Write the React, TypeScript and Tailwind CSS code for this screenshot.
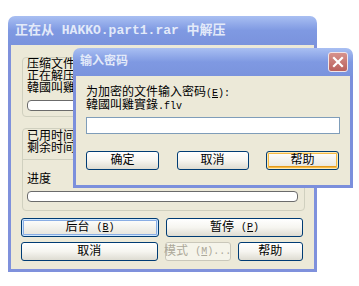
import React from "react";

// XP-style dialogs: extraction progress window with password prompt on top

const CJK = "font-['Liberation_Mono','Noto_Sans_CJK_SC',monospace]";

// half-width latin, about 6px per char like SimSun at 12px
function Lat({ children }: { children: React.ReactNode }) {
  return <span className="text-[10px]">{children}</span>;
}

type BtnKind = "normal" | "focus" | "hot" | "disabled";

function XpButton({
  children,
  kind = "normal",
  className = "",
}: {
  children: React.ReactNode;
  kind?: BtnKind;
  className?: string;
}) {
  const look =
    kind === "disabled"
      ? "border-[#c9c7ba] bg-[#f5f4ea] text-[#aca899]"
      : kind === "hot"
      ? "border-[#003c74] bg-gradient-to-b from-white to-[#e6e4da] text-black shadow-[inset_0_0_0_1px_#fce9b4,inset_0_0_0_2px_#f5b944,inset_0_-1px_0_2px_#e59b1c]"
      : kind === "focus"
      ? "border-[#003c74] bg-gradient-to-b from-white to-[#e6e4da] text-black shadow-[inset_0_0_0_1px_#cee7ff,inset_0_0_0_2px_#89ade4]"
      : "border-[#003c74] bg-gradient-to-b from-white via-[#f6f5f0] to-[#dedcd2] text-black";
  return (
    <div
      className={`h-[19px] rounded-[3px] border flex items-center justify-center whitespace-pre text-[12px] leading-none ${CJK} ${look} ${className}`}
    >
      {children}
    </div>
  );
}

function TitleBar({
  children,
  height,
  close,
}: {
  children: React.ReactNode;
  height: string;
  close?: boolean;
}) {
  return (
    <div
      className={`${height} flex items-center justify-between pl-[7px] pr-[5px] bg-gradient-to-b from-[#a9bff2] via-[#7f99e2] to-[#7a93dd] text-[#e3eaf9] font-bold ${CJK}`}
    >
      {children}
      {close && (
        <div className="w-[20px] h-[20px] rounded-[3px] border border-[#f1e4e8] bg-gradient-to-b from-[#d7928d] to-[#b9615d] flex items-center justify-center">
          <svg width="12" height="12" viewBox="0 0 12 12">
            <path d="M2 2 L10 10 M10 2 L2 10" stroke="white" strokeWidth="2.2" strokeLinecap="square" />
          </svg>
        </div>
      )}
    </div>
  );
}

function Progress() {
  return <div className="h-[11px] rounded-[4px] border border-[#6b6b6b] bg-white" />;
}

export default function App() {
  return (
    <div className={`relative w-[359px] h-[286px] bg-white overflow-hidden ${CJK}`}>
      {/* Back window: extraction progress */}
      <div className="absolute left-[8px] top-[16px] w-[309px] h-[256px] flex flex-col rounded-t-[7px] overflow-hidden">
        <TitleBar height="h-[29px]">
          <span className="text-[13px] whitespace-nowrap">正在从 HAKKO.part1.rar 中解压</span>
        </TitleBar>
        <div className="flex-1 flex flex-col bg-[#ece9d8] border-x-[3px] border-b-[3px] border-[#7f91dc] pl-[10px] pr-[11px] pt-[12px] text-[12px] text-black">
          <div className="ml-[1px] -mr-[2px] h-[60px] rounded-[4px] border border-[#d0d0bf] pl-[4px] pr-[6px] pt-[1px] flex flex-col">
            <div className="leading-[12px] whitespace-nowrap">压缩文件</div>
            <div className="leading-[12px] whitespace-nowrap">正在解压</div>
            <div className="leading-[12px] whitespace-nowrap">韓國叫雞</div>
            <div className="mt-[5px]">
              <Progress />
            </div>
          </div>
          <div className="ml-[1px] -mr-[2px] mt-[11px] h-[83px] rounded-[4px] border border-[#d0d0bf] flex flex-col">
            <div className="pl-[4px] pt-[2px] h-[30px]">
              <div className="leading-[12px] whitespace-nowrap">已用时间</div>
              <div className="leading-[12px] whitespace-nowrap">剩余时间</div>
            </div>
            <div className="h-px bg-[#d0d0bf]" />
            <div className="pl-[4px] pr-[6px] pt-[13px]">
              <div className="leading-[14px]">进度</div>
              <div className="mt-[4px]">
                <Progress />
              </div>
            </div>
          </div>
          <div className="mt-[7px] flex gap-[7px]">
            <XpButton kind="focus" className="w-[138px]">
              {"后台 "}
              <Lat>(<u>B</u>)</Lat>
            </XpButton>
            <XpButton className="w-[137px]">
              {"暂停 "}
              <Lat>(<u>P</u>)</Lat>
            </XpButton>
          </div>
          <div className="mt-[5px] flex gap-[7px]">
            <XpButton className="w-[138px]">取消</XpButton>
            <XpButton kind="disabled" className="w-[66px]">
              {"模式 "}
              <Lat>(<u>M</u>)...</Lat>
            </XpButton>
            <XpButton className="w-[66px]">帮助</XpButton>
          </div>
        </div>
      </div>

      {/* Front dialog: password prompt */}
      <div className="absolute left-[73px] top-[48px] w-[280px] h-[140px] flex flex-col rounded-t-[7px] overflow-hidden">
        <TitleBar height="h-[28px]" close>
          <span className="text-[12px]">输入密码</span>
        </TitleBar>
        <div className="flex-1 flex flex-col bg-[#ece9d8] border-x-[3px] border-b-[3px] border-[#7b8fdc] pl-[10px] pr-[10px] pt-[11px] text-[12px] text-black">
          <div className="leading-[12px] whitespace-nowrap">
            为加密的文件输入密码<Lat>(<u>E</u>):</Lat>
          </div>
          <div className="leading-[12px] whitespace-nowrap">
            韓國叫雞實錄<Lat>.flv</Lat>
          </div>
          <div className="mt-[4px] h-[17px] border border-[#7f9db9] bg-white" />
          <div className="mt-[17px] flex justify-between pr-[1px]">
            <XpButton className="w-[73px]">确定</XpButton>
            <XpButton className="w-[72px]">取消</XpButton>
            <XpButton kind="hot" className="w-[73px]">
              帮助
            </XpButton>
          </div>
        </div>
      </div>
    </div>
  );
}
